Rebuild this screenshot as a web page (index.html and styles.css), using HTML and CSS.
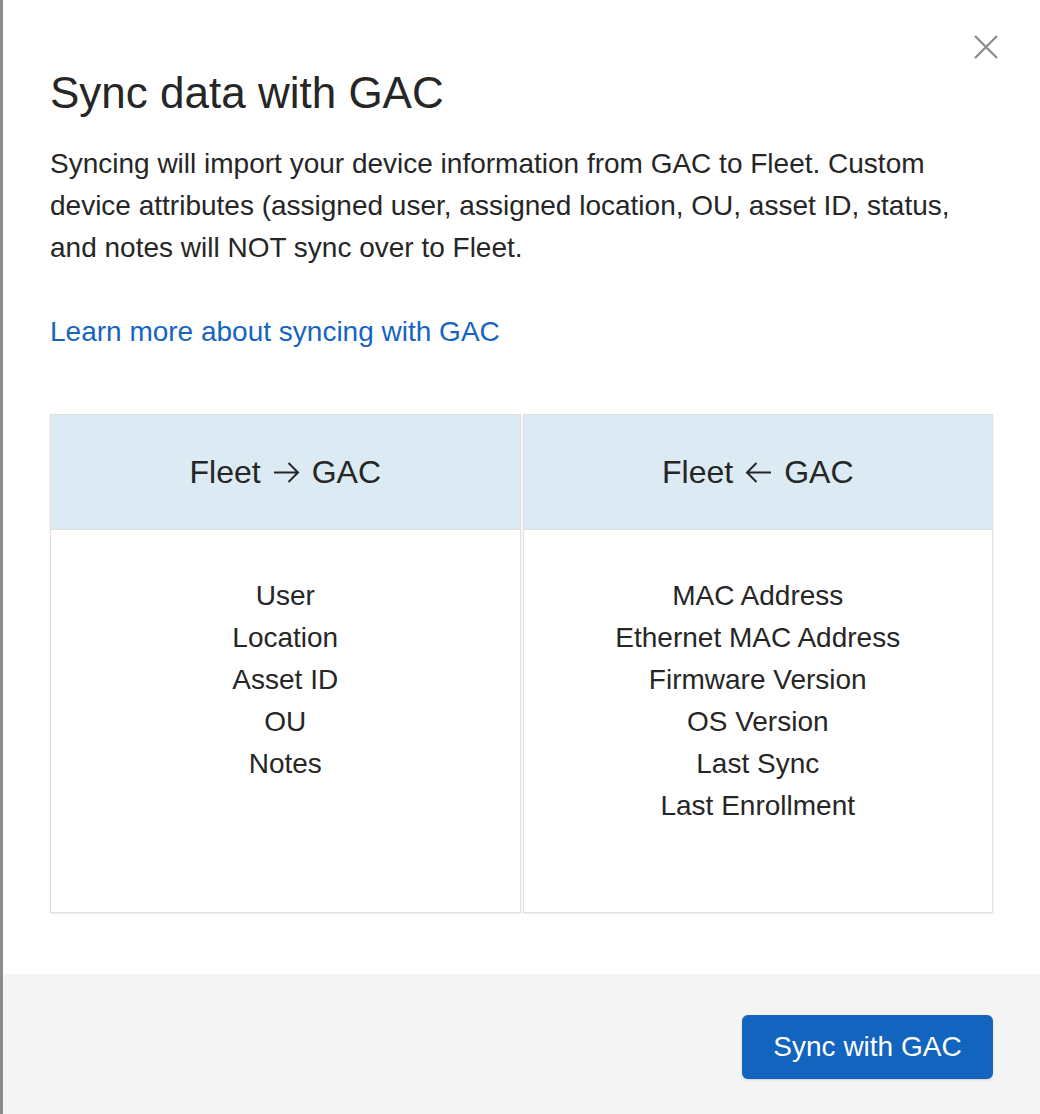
FILE: index.html
```html
<!DOCTYPE html>
<html lang="en">
<head>
  <meta charset="UTF-8" />
  <meta name="viewport" content="width=device-width, initial-scale=1.0"/>
  <title>Sync data with GAC</title>
  <link rel="stylesheet" href="styles.css">
</head>
<body>
  <div class="modal">
    <button type="button" class="close-btn" aria-label="Close">
      <svg width="24" height="24" viewBox="0 0 24 24"><path d="M1 1 L23 23 M23 1 L1 23" stroke="#8a8a8a" stroke-width="2.2" fill="none"/></svg>
    </button>
    <div class="modal-body">
      <h1>Sync data with GAC</h1>
      <p class="intro">Syncing will import your device information from GAC to Fleet. Custom device attributes (assigned user, assigned location, OU, asset ID, status, and notes will NOT sync over to Fleet.</p>
      <a class="learn-link" href="#">Learn more about syncing with GAC</a>

      <div class="sync-table">
        <div class="sync-col">
          <div class="sync-head">
            Fleet
            <svg class="arrow" width="27" height="23" viewBox="0 0 27 23"><path d="M1 11.5 H25 M15.5 2 L25 11.5 L15.5 21" stroke="#262626" stroke-width="2" fill="none"/></svg>
            GAC
          </div>
          <ul class="sync-list">
            <li>User</li>
            <li>Location</li>
            <li>Asset ID</li>
            <li>OU</li>
            <li>Notes</li>
          </ul>
        </div>
        <div class="sync-col">
          <div class="sync-head">
            Fleet
            <svg class="arrow" width="27" height="23" viewBox="0 0 27 23"><path d="M26 11.5 H2 M11.5 2 L2 11.5 L11.5 21" stroke="#262626" stroke-width="2" fill="none"/></svg>
            GAC
          </div>
          <ul class="sync-list">
            <li>MAC Address</li>
            <li>Ethernet MAC Address</li>
            <li>Firmware Version</li>
            <li>OS Version</li>
            <li>Last Sync</li>
            <li>Last Enrollment</li>
          </ul>
        </div>
      </div>
    </div>
    <div class="modal-footer">
      <button type="button" class="sync-btn">Sync with GAC</button>
    </div>
  </div>
</body>
</html>
```

FILE: styles.css
```css
body {
  margin: 0;
  background: #8c8c8c;
  font-family: 'Liberation Sans', Arial, sans-serif;
  color: #262626;
}
.modal {
  position: relative;
  margin-left: 3px;
  min-height: 1114px;
  background: #ffffff;
  display: flex;
  flex-direction: column;
}
.close-btn {
  position: absolute;
  top: 35px;
  right: 42px;
  background: none;
  border: none;
  padding: 0;
  cursor: pointer;
  line-height: 0;
}
.modal-body {
  padding: 67px 47px 61px;
}
h1 {
  margin: 0;
  font-size: 44px;
  font-weight: normal;
  line-height: 52px;
  color: #262626;
}
.intro {
  margin: 24px 0 0;
  font-size: 28px;
  line-height: 42px;
}
.learn-link {
  display: block;
  margin-top: 42px;
  font-size: 28px;
  line-height: 42px;
  color: #1565c0;
  text-decoration: none;
}
.sync-table {
  margin-top: 61px;
  display: grid;
  grid-template-columns: 1fr 1fr;
  gap: 2px;
}
.sync-col {
  border: 1px solid #e0e0e0;
  box-shadow: 0 1px 2px rgba(0,0,0,0.08);
  display: flex;
  flex-direction: column;
}
.sync-head {
  height: 114px;
  background: #dceaf3;
  border-bottom: 1px solid #e0e0e0;
  display: flex;
  align-items: center;
  justify-content: center;
  gap: 12px;
  font-size: 32px;
}
.sync-list {
  list-style: none;
  margin: 0;
  padding: 45px 0 85px;
  text-align: center;
  font-size: 28px;
  line-height: 42px;
}
.modal-footer {
  flex: 1;
  background: #f4f4f4;
  padding: 41px 47px 36px;
  display: flex;
  justify-content: flex-end;
  align-items: flex-start;
}
.sync-btn {
  width: 251px;
  height: 64px;
  background: #1264be;
  color: #ffffff;
  border: none;
  border-radius: 6px;
  font-family: 'Liberation Sans', Arial, sans-serif;
  font-size: 28px;
  box-shadow: 0 1px 2px rgba(0,0,0,0.15);
  cursor: pointer;
}
```
